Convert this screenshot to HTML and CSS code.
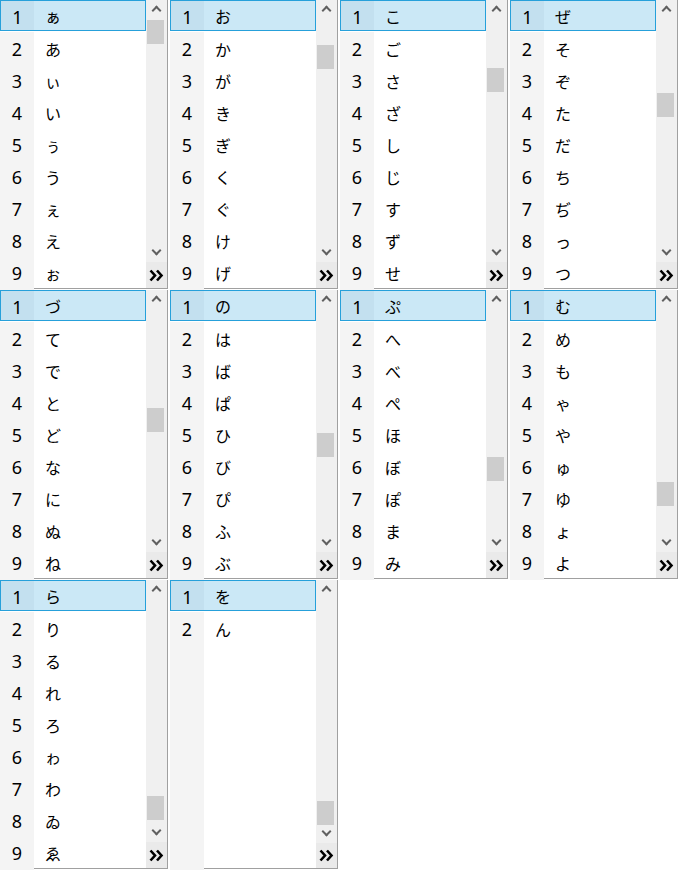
FILE: index.html
```html
<!DOCTYPE html>
<html>
  <head>
    <title>Candidate windows</title>
    <link rel="stylesheet" href="styles.css">
  </head>
  <body>
    <div id="board" class="board"></div>

    <script>
      var pages = [
        ["ぁ", "あ", "ぃ", "い", "ぅ", "う", "ぇ", "え", "ぉ"],
        ["お", "か", "が", "き", "ぎ", "く", "ぐ", "け", "げ"],
        ["こ", "ご", "さ", "ざ", "し", "じ", "す", "ず", "せ"],
        ["ぜ", "そ", "ぞ", "た", "だ", "ち", "ぢ", "っ", "つ"],
        ["づ", "て", "で", "と", "ど", "な", "に", "ぬ", "ね"],
        ["の", "は", "ば", "ぱ", "ひ", "び", "ぴ", "ふ", "ぶ"],
        ["ぷ", "へ", "べ", "ぺ", "ほ", "ぼ", "ぽ", "ま", "み"],
        ["む", "め", "も", "ゃ", "や", "ゅ", "ゆ", "ょ", "よ"],
        ["ら", "り", "る", "れ", "ろ", "ゎ", "わ", "ゐ", "ゑ"],
        ["を", "ん"]
      ];

      // thumb offset inside the track, one per page
      var thumbs = [2, 27, 50, 75, 100, 125, 149, 174, 198, 204];

      var moreIcon = '<svg width="15" height="13" viewBox="0 0 15 13"><path d="M1.5 1.5 L6 6.5 L1.5 11.5 M8 1.5 L12.5 6.5 L8 11.5" fill="none" stroke="#000" stroke-width="2.6"/></svg>';

      function renderPanel(words, thumbTop) {
        var rows = "";
        for (var i = 0; i < 9; i++) {
          var word = words[i];
          var cls = i === 0 ? "row selected" : "row";
          if (word) {
            rows += `<div class="${cls}"><span class="num">${i + 1}</span><span class="word">${word}</span></div>`;
          } else {
            rows += `<div class="row"><span class="num"></span><span class="word"></span></div>`;
          }
        }

        return `<div class="panel">
            <div class="list">${rows}<div class="filler"><span class="num"></span><span class="word"></span></div></div>
            <div class="scroll">
              <div class="arrow up"></div>
              <div class="track"><div class="thumb" style="margin-top:${thumbTop}px"></div></div>
              <div class="arrow down"></div>
              <div class="more">${moreIcon}</div>
            </div>
          </div>`;
      }

      var board = document.getElementById("board");
      var html = "";
      for (var p = 0; p < pages.length; p++) {
        html += renderPanel(pages[p], thumbs[p]);
      }
      board.innerHTML = html;
    </script>
  </body>
</html>
```

FILE: styles.css
```css
body {
  margin: 0;
  background-color: #fff;
  font-family: "Noto Sans", "Noto Sans CJK JP", sans-serif;
}
.board {
  display: grid;
  grid-template-columns: repeat(4, 170px);
  grid-auto-rows: 290px;
}
.panel {
  display: flex;
  width: 167px;
  height: 288px;
  border-right: 1px solid #a0a0a0;
  border-bottom: 1px solid #a0a0a0;
  background-color: #fff;
}
.list {
  display: flex;
  flex-direction: column;
  width: 146px;
}
.row {
  display: flex;
  height: 32px;
  flex-shrink: 0;
}
.row .num,
.filler .num {
  width: 34px;
  background-color: #f4f4f4;
}
.num {
  display: flex;
  align-items: center;
  justify-content: center;
  font-size: 18px;
  color: #000;
  padding-top: 2px;
  box-sizing: border-box;
}
.word {
  display: flex;
  align-items: center;
  flex-grow: 1;
  padding-left: 11px;
  padding-top: 1px;
  font-family: "Noto Sans CJK JP", sans-serif;
  font-size: 16px;
  color: #000;
}
.row.selected {
  height: 31px;
  margin-bottom: 1px;
  box-sizing: border-box;
  border: 1px solid #26a0da;
  background-color: #cbe8f6;
}
.row.selected .num {
  width: 33px;
  background-color: #c3e0ef;
}
.filler {
  display: flex;
  flex-grow: 1;
}
.filler .word {
  padding: 0;
}
.scroll {
  display: flex;
  flex-direction: column;
  width: 21px;
  background-color: #f0f0f0;
}
.arrow {
  height: 18px;
  position: relative;
}
.arrow::before {
  content: "";
  position: absolute;
  left: 7px;
  width: 5px;
  height: 5px;
  border-left: 2px solid #606060;
  border-top: 2px solid #606060;
}
.arrow.up::before {
  top: 7px;
  transform: rotate(45deg);
}
.arrow.down::before {
  top: 3px;
  transform: rotate(225deg);
}
.track {
  flex-grow: 1;
}
.thumb {
  width: 17px;
  height: 24px;
  margin-left: 1px;
  background-color: #cdcdcd;
}
.more {
  display: flex;
  align-items: center;
  justify-content: center;
  height: 26px;
  background-color: #eaeaea;
}
```
